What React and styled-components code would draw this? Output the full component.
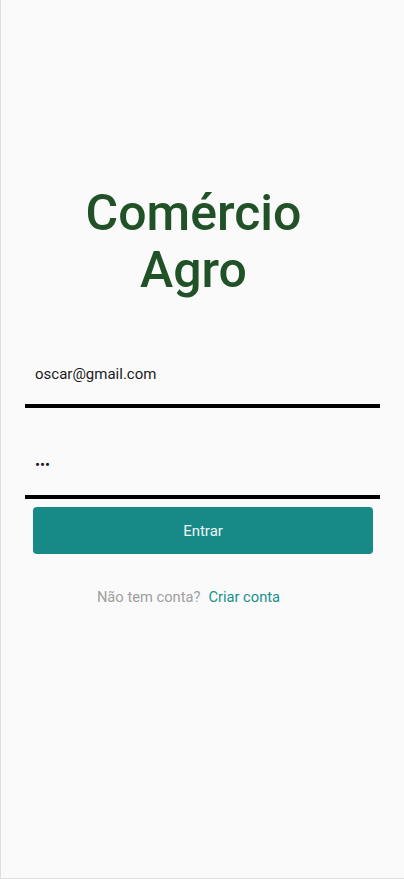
import React, { useState } from 'react';
import styled, { createGlobalStyle } from 'styled-components';

const GlobalStyle = createGlobalStyle`
  html, body {
    margin: 0;
    padding: 0;
    background: #fafafa;
  }
  body {
    font-family: Roboto, 'Noto Sans', Arial, sans-serif;
  }
`;

const Screen = styled.div`
  box-sizing: border-box;
  width: 404px;
  height: 879px;
  background: #fafafa;
  border-left: 1px solid #dedede;
  border-bottom: 1px solid #dedede;
  display: flex;
  flex-direction: column;
  padding: 185px 24px 0 24px;
`;

const Title = styled.h1`
  margin: 0 18px 45px 0;
  text-align: center;
  color: #215227;
  font-size: 50px;
  font-weight: 500;
  line-height: 57px;
`;

const Field = styled.input`
  box-sizing: border-box;
  width: 355px;
  height: 64px;
  margin: 0;
  padding: 0 10px;
  border: none;
  border-bottom: 4px solid #000;
  background: transparent;
  outline: none;
  font-family: Roboto, Arial, sans-serif;
  font-size: 15px;
  color: #1a1a1a;

  & + & {
    margin-top: 27px;
  }
`;

const SubmitButton = styled.button`
  align-self: center;
  width: 340px;
  height: 47px;
  margin: 8px 0 0 1px;
  border: none;
  border-radius: 4px;
  background: #178a88;
  color: #eef7f6;
  font-family: Roboto, Arial, sans-serif;
  font-size: 15px;
  cursor: pointer;
`;

const SignupRow = styled.p`
  margin: 34px 28px 0 0;
  display: flex;
  justify-content: center;
  gap: 8px;
  font-size: 14.7px;
  line-height: 18px;
`;

const Muted = styled.span`
  color: #9e9e9e;
`;

const LinkText = styled.a`
  color: #16918c;
  text-decoration: none;
  cursor: pointer;
`;

export default function App() {
  const [email, setEmail] = useState('oscar@gmail.com');
  const [password, setPassword] = useState('123');

  return (
    <>
      <GlobalStyle />
      <Screen>
        <Title>
          Comércio
          <br />
          Agro
        </Title>
        <Field type="email" value={email} onChange={e => setEmail(e.target.value)} />
        <Field type="password" value={password} onChange={e => setPassword(e.target.value)} />
        <SubmitButton>Entrar</SubmitButton>
        <SignupRow>
          <Muted>Não tem conta?</Muted>
          <LinkText>Criar conta</LinkText>
        </SignupRow>
      </Screen>
    </>
  );
}
